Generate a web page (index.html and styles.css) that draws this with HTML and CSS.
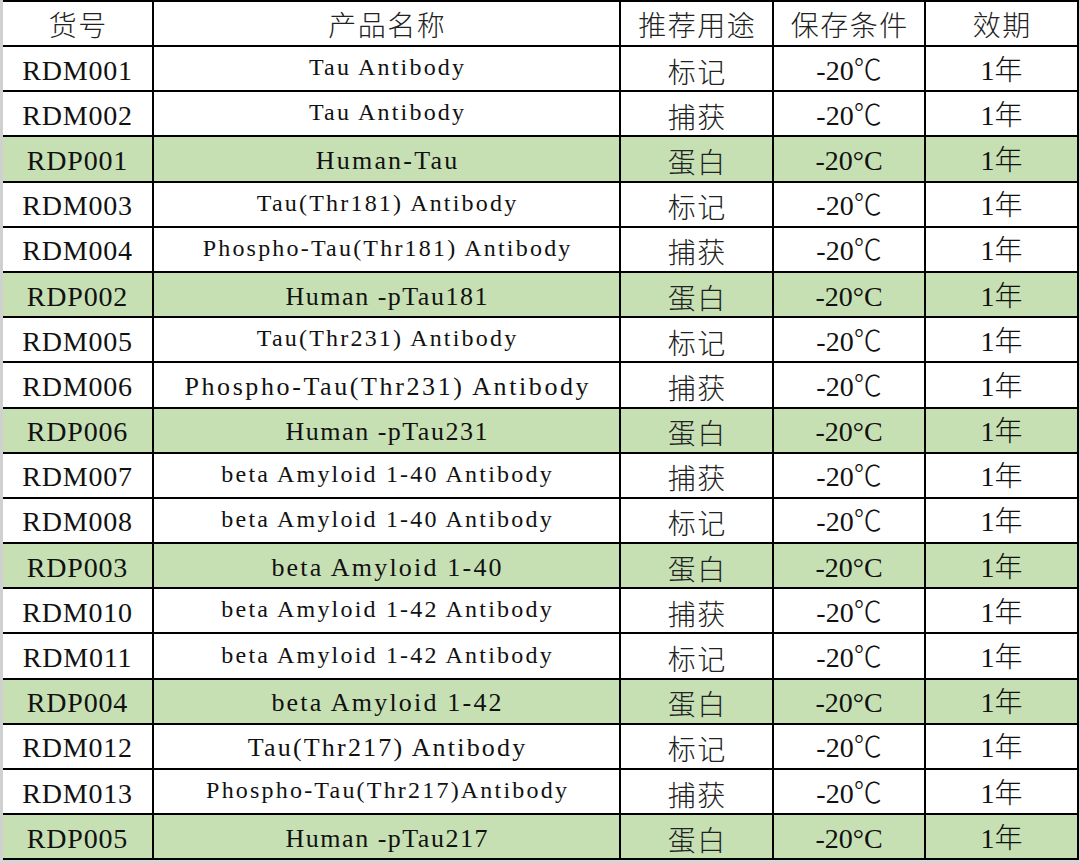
FILE: index.html
```html
<!DOCTYPE html>
<html lang="zh">
<head>
<meta charset="utf-8">
<title>产品列表</title>
<link rel="stylesheet" href="styles.css">
</head>
<body>
<div class="sheet">
  <div class="row head"><div>货号</div><div>产品名称</div><div>推荐用途</div><div>保存条件</div><div>效期</div></div>

  <div class="row"><div class="code">RDM001</div><div class="name sm">Tau Antibody</div><div class="cjk">标记</div><div class="temp">-20℃</div><div class="yr">1年</div></div>
  <div class="row"><div class="code">RDM002</div><div class="name sm">Tau Antibody</div><div class="cjk">捕获</div><div class="temp">-20℃</div><div class="yr">1年</div></div>
  <div class="row g"><div class="code">RDP001</div><div class="name lg">Human-Tau</div><div class="cjk">蛋白</div><div class="temp">-20°C</div><div class="yr">1年</div></div>

  <div class="row"><div class="code">RDM003</div><div class="name sm">Tau(Thr181) Antibody</div><div class="cjk">标记</div><div class="temp">-20℃</div><div class="yr">1年</div></div>
  <div class="row"><div class="code">RDM004</div><div class="name sm">Phospho-Tau(Thr181) Antibody</div><div class="cjk">捕获</div><div class="temp">-20℃</div><div class="yr">1年</div></div>
  <div class="row g"><div class="code">RDP002</div><div class="name md">Human -pTau181</div><div class="cjk">蛋白</div><div class="temp">-20°C</div><div class="yr">1年</div></div>

  <div class="row"><div class="code">RDM005</div><div class="name sm">Tau(Thr231) Antibody</div><div class="cjk">标记</div><div class="temp">-20℃</div><div class="yr">1年</div></div>
  <div class="row"><div class="code">RDM006</div><div class="name xl">Phospho-Tau(Thr231) Antibody</div><div class="cjk">捕获</div><div class="temp">-20℃</div><div class="yr">1年</div></div>
  <div class="row g"><div class="code">RDP006</div><div class="name md">Human -pTau231</div><div class="cjk">蛋白</div><div class="temp">-20°C</div><div class="yr">1年</div></div>

  <div class="row"><div class="code">RDM007</div><div class="name sm">beta Amyloid 1-40 Antibody</div><div class="cjk">捕获</div><div class="temp">-20℃</div><div class="yr">1年</div></div>
  <div class="row"><div class="code">RDM008</div><div class="name sm">beta Amyloid 1-40 Antibody</div><div class="cjk">标记</div><div class="temp">-20℃</div><div class="yr">1年</div></div>
  <div class="row g"><div class="code">RDP003</div><div class="name lg">beta Amyloid 1-40</div><div class="cjk">蛋白</div><div class="temp">-20°C</div><div class="yr">1年</div></div>

  <div class="row"><div class="code">RDM010</div><div class="name sm">beta Amyloid 1-42 Antibody</div><div class="cjk">捕获</div><div class="temp">-20℃</div><div class="yr">1年</div></div>
  <div class="row"><div class="code">RDM011</div><div class="name sm">beta Amyloid 1-42 Antibody</div><div class="cjk">标记</div><div class="temp">-20℃</div><div class="yr">1年</div></div>
  <div class="row g"><div class="code">RDP004</div><div class="name lg">beta Amyloid 1-42</div><div class="cjk">蛋白</div><div class="temp">-20°C</div><div class="yr">1年</div></div>

  <div class="row"><div class="code">RDM012</div><div class="name lg">Tau(Thr217) Antibody</div><div class="cjk">标记</div><div class="temp">-20℃</div><div class="yr">1年</div></div>
  <div class="row"><div class="code">RDM013</div><div class="name sm">Phospho-Tau(Thr217)Antibody</div><div class="cjk">捕获</div><div class="temp">-20℃</div><div class="yr">1年</div></div>
  <div class="row g"><div class="code">RDP005</div><div class="name md">Human -pTau217</div><div class="cjk">蛋白</div><div class="temp">-20°C</div><div class="yr">1年</div></div>
</div>
</body>
</html>
```

FILE: styles.css
```css
html, body {
  margin: 0;
  padding: 0;
  background: #d6d6d6;
}

body {
  font-family: "Liberation Serif", "Noto Sans CJK SC", serif;
  color: #111;
}

.sheet {
  display: grid;
  grid-template-columns: 149px 465px 151px 150px 151px;
  grid-template-rows: 43px repeat(18, 43.2px);
  gap: 2px;
  background: #000;
  padding: 2px 2px 2px 0;
  border-left: 3px solid #d0d0d0;
  width: max-content;
}

.row {
  display: contents;
}

.row > div {
  background: #fff;
  display: flex;
  align-items: center;
  justify-content: center;
  white-space: nowrap;
  font-size: 28px;
  line-height: 1;
  padding-top: 4px;
  box-sizing: border-box;
}

.row.g > div {
  background: #c6e0b4;
}

.head > div {
  font-family: "Noto Sans CJK SC", sans-serif;
  font-weight: 300;
  font-size: 28px;
  letter-spacing: 1.5px;
  padding-left: 1.5px;
  padding-top: 1px;
  color: #222;
}

.code {
  letter-spacing: 0.8px;
}

.name.sm {
  font-size: 24px;
  letter-spacing: 2.2px;
  padding-left: 2.2px;
  padding-top: 0;
  padding-bottom: 3px;
}

.name.md {
  font-size: 26px;
  letter-spacing: 1.5px;
  padding-left: 1.5px;
}

.name.lg {
  font-size: 26px;
  letter-spacing: 2.2px;
  padding-left: 2.2px;
}

.name.xl {
  font-size: 26px;
  letter-spacing: 2.6px;
  padding-left: 2.6px;
}

.cjk {
  font-family: "Noto Sans CJK SC", sans-serif;
  font-weight: 300;
  letter-spacing: 1.5px;
  padding-left: 1.5px;
  color: #222;
}

.row > .cjk {
  font-size: 28px;
}

.temp,
.yr {
  font-family: "Liberation Serif", "Noto Sans CJK SC", serif;
  font-weight: 300;
  font-size: 28px;
}
```
